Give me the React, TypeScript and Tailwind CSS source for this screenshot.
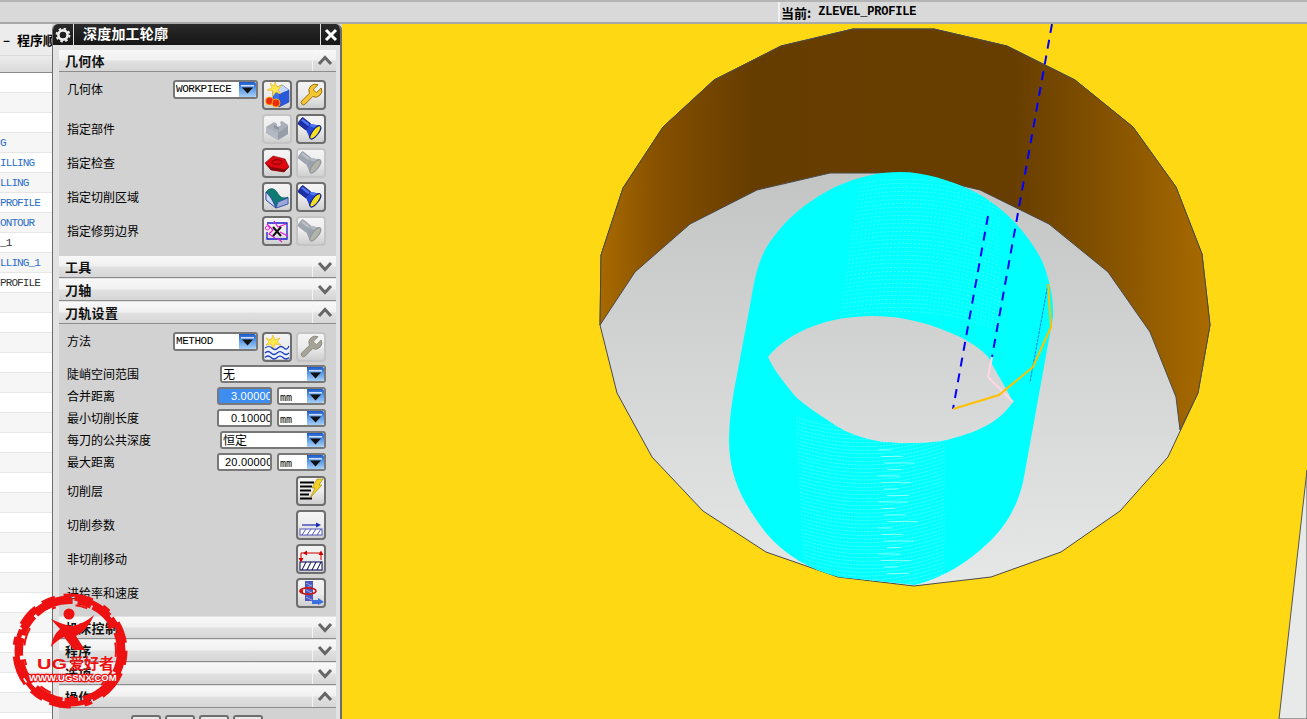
import React from "react";

const CJK = '"Noto Sans CJK SC","Liberation Sans",sans-serif';

const outer = "600,325 601,255 623,188 663,127 714,80 781,46 853,29 934,29 1007,46 1075,80 1133,127 1176,187 1202,254 1210,325 1198,393 1168,457 1120,511 1061,552 991,577 914,586 838,577 766,552 703,511 652,457 617,393";
const wall = "600,325 601,255 623,188 663,127 714,80 781,46 853,29 934,29 1007,46 1075,80 1133,127 1176,187 1202,254 1210,325 1198,393 1180,430 1176,397 1150,332 1108,272 1049,224 980,190 908,173 830,173 757,190 690,224 635,272";
const cyan = "M729 440 C729 420 732 400 736 380 L751 300 C755 275 759 262 765 250 C780 225 800 205 835 187 C860 176 880 172 900 172 C925 172 950 180 975 192 C1005 208 1030 235 1043 263 C1050 282 1054 300 1053 317 L1024 477 C1020 500 1008 525 988 543 C968 562 945 577 915 585 L839 577 C810 570 785 555 766 533 C745 505 729 480 729 440 Z";
const lens = "M768 357 C790 330 830 316 873 316 C905 316 935 325 960 337 C975 345 982 350 988 357 C998 375 1006 388 1013 402 C1000 420 985 430 947 440 C930 443 920 443 910 443 C895 443 885 443 873 440 C855 436 842 430 832 423 C815 412 805 405 796 397 C782 380 774 370 768 357 Z";

function Scene() {
  const arcs: string[] = [];
  for (let i = 0; i < 44; i++) {
    const y = 418 + i * 3.7;
    arcs.push(`M${796 + i * 0.2} ${y} Q870 ${y + 22} 945 ${y - 4}`);
  }
  const top: string[] = [];
  for (let i = 0; i < 34; i++) {
    const y = 178 + i * 4;
    top.push(`M${860 - i * 0.6} ${y + 6} Q930 ${y - 8} 1000 ${y + 20}`);
  }
  const dashes: string[] = [];
  for (let i = 0; i < 20; i++) {
    const y = 450 + i * 6.5;
    dashes.push(`M${878 + (i % 4) * 3} ${y} h${14 + (i % 3) * 8}`);
  }
  return (
    <svg viewBox="342 24 965 695" className="block w-full h-full">
      <defs>
        <linearGradient id="floor" gradientUnits="userSpaceOnUse" x1="0" y1="173" x2="0" y2="586">
          <stop offset="0" stopColor="#c3c4c4" />
          <stop offset="1" stopColor="#e6e8e8" />
        </linearGradient>
        <linearGradient id="wall" gradientUnits="userSpaceOnUse" x1="600" y1="0" x2="1210" y2="0">
          <stop offset="0" stopColor="#a86a00" />
          <stop offset="0.1" stopColor="#854f00" />
          <stop offset="0.25" stopColor="#663d00" />
          <stop offset="0.68" stopColor="#683e00" />
          <stop offset="0.84" stopColor="#865300" />
          <stop offset="1" stopColor="#a96b00" />
        </linearGradient>
        <clipPath id="cy"><path d={cyan} /></clipPath>
      </defs>
      <polygon points="1307,470 1279,719 1307,719" fill="#e8eaea" stroke="#555" strokeWidth="1" />
      <polygon points={outer} fill="url(#floor)" stroke="#4a4a4a" strokeWidth="1" />
      <polygon points={wall} fill="url(#wall)" stroke="#4a4a4a" strokeWidth="1" />
      <path d={cyan} fill="#00ffff" />
      <g clipPath="url(#cy)" fill="none">
        <path d={arcs.join(" ")} stroke="#d8ffff" strokeWidth="0.6" strokeOpacity="0.55" strokeDasharray="2 1" />
        <path d={top.join(" ")} stroke="#d8ffff" strokeWidth="0.6" strokeOpacity="0.5" strokeDasharray="2 2" />
        <path d={dashes.join(" ")} stroke="#ffffff" strokeWidth="0.8" strokeOpacity="0.6" />
      </g>
      <path d={lens} fill="url(#floor)" />
      <g fill="none">
        <polyline points="1048,284 1030,382" stroke="#1a7ad8" strokeWidth="1" strokeDasharray="3 1" />
        <line x1="1052" y1="24" x2="992" y2="357" stroke="#0000ff" strokeWidth="2" strokeDasharray="9 7" />
        <line x1="988" y1="216" x2="953" y2="409" stroke="#0000ff" strokeWidth="2" strokeDasharray="9 7" />
        <polyline points="992,357 988,377 1013,402" stroke="#ffd8e4" strokeWidth="2" />
        <polyline points="953,409 999,395 1033,367 1051,327 1048,284" stroke="#ffc000" strokeWidth="2" />
      </g>
    </svg>
  );
}

const Chevron = ({ up }: { up?: boolean }) => (
  <svg width="16" height="11" viewBox="0 0 16 11">
    <polyline points={up ? "2,9 8,2.5 14,9" : "2,2 8,8.5 14,2"} fill="none" stroke="#666" strokeWidth="3" />
  </svg>
);

function Header({ title, up, className = "" }: { title: string; up?: boolean; className?: string }) {
  return (
    <div className={`h-[22px] flex items-center shrink-0 border-b border-[#8c8c8c] bg-[linear-gradient(#f7f8f7_0%,#f0f1f0_45%,#dfe0df_55%,#d5d6d5_100%)] ${className}`}>
      <span className="flex-1 pl-[6px] text-[13px] font-bold text-[#111] tracking-[0.3px]">{title}</span>
      <span className="w-[24px] h-full flex items-center justify-center border-l border-[#f4f4f4]">
        <Chevron up={up} />
      </span>
    </div>
  );
}

function IconBtn({ children, off }: { children: React.ReactNode; off?: boolean }) {
  return (
    <div className={`w-[30px] h-[30px] shrink-0 rounded-[4px] border-2 flex items-center justify-center bg-[linear-gradient(#f4f4f4_0%,#ececec_50%,#cfcfcf_100%)] ${off ? "border-[#c4c4c4]" : "border-[#6e6e6e]"}`}>
      {children}
    </div>
  );
}

const S = ({ children }: { children: React.ReactNode }) => (
  <svg width="26" height="26" viewBox="0 0 26 26">{children}</svg>
);

const IcoNew = () => (
  <S>
    <polygon points="9,7 18,3 25,8 25,20 15,25 9,21" fill="#3f6fe8" stroke="#1b3a9c" strokeWidth="0.6" />
    <polygon points="9,7 18,3 25,8 15,12" fill="#c8d8fc" />
    <polygon points="15,12 25,8 25,20 15,25" fill="#2a58d8" />
    <polygon points="11,0 13,5 18,3 14,8 17,12 12,10 9,14 9,9 3,8 8,6 6,1 10,4" fill="#ffe94a" stroke="#e0a800" strokeWidth="0.5" />
    <circle cx="5.5" cy="19" r="4" fill="#ef2a12" stroke="#ffc000" strokeWidth="0.8" />
    <circle cx="12" cy="21" r="4" fill="#ef2a12" stroke="#ffc000" strokeWidth="0.8" />
  </S>
);

const IcoWrench = ({ off }: { off?: boolean }) => (
  <svg width="26" height="26" viewBox="0 0 24 24">
    <path
      d="M14.7 6.3a1 1 0 0 0 0 1.4l1.6 1.6a1 1 0 0 0 1.4 0l3.77-3.77a6 6 0 0 1-7.94 7.94l-6.91 6.91a2.12 2.12 0 0 1-3-3l6.91-6.91a6 6 0 0 1 7.94-7.94l-3.76 3.76z"
      fill={off ? "#a5a296" : "#f4c632"}
      stroke={off ? "#8e8b80" : "#9a6a10"}
      strokeWidth="0.9"
    />
  </svg>
);

const IcoTorch = ({ off }: { off?: boolean }) => (
  <S>
    <g transform="rotate(38 13 13)">
      <rect x="-1" y="9" width="11" height="8" rx="1" fill={off ? "#a0a6b0" : "#1c2fa8"} stroke={off ? "#9298a2" : "#0a1460"} strokeWidth="0.6" />
      <rect x="0" y="10" width="9" height="2.4" fill={off ? "#bcc0c8" : "#4f78f0"} />
      <polygon points="10,9 18,5 18,21 10,17" fill={off ? "#9ca2ac" : "#2346d8"} />
      <polygon points="10,9 18,5 18,9 10,11.5" fill={off ? "#b4b8c0" : "#4f78f0"} />
      <ellipse cx="18.5" cy="13" rx="3" ry="8" fill={off ? "#b2b4a8" : "#f4e020"} stroke={off ? "#92969e" : "#10208a"} strokeWidth="1.1" />
    </g>
  </S>
);

const IcoPart = () => (
  <S>
    <polygon points="2,11 10,6 13,8 13,12 17,9 16,6 18,5 24,9 24,18 14,24 2,17" fill="#a9aeb8" />
    <polygon points="2,11 14,17 14,24 2,17" fill="#b4b8c2" />
    <polygon points="14,17 24,10 24,18 14,24" fill="#969ca8" />
    <polygon points="10,9 15,11 15,14 10,12" fill="#8f95a2" />
  </S>
);

const IcoCheck = () => (
  <S>
    <polygon points="1,13 9,6 21,9 25,17 20,22 7,20" fill="#e00810" stroke="#7a0408" strokeWidth="0.6" />
    <polygon points="1,13 7,17 20,19 25,17 20,22 7,20" fill="#8c060c" />
    <ellipse cx="13" cy="12" rx="5" ry="2.2" fill="none" stroke="#7a0408" strokeWidth="1" />
  </S>
);

const IcoArea = () => (
  <S>
    <path d="M2 8 C6 3 10 4 13 8 C16 13 18 15 24 13 L24 20 L12 24 L2 16 Z" fill="#0f7a72" stroke="#0a4a48" strokeWidth="0.5" />
    <path d="M2 8 L2 16 L12 24 C9 18 8 14 2 8 Z" fill="#cfd8f4" stroke="#2a3ab0" strokeWidth="0.8" />
    <path d="M12 24 L24 20 L24 14 L14 18 Z" fill="#9aa8d8" stroke="#2a3ab0" strokeWidth="0.6" />
  </S>
);

const IcoTrim = () => (
  <S>
    <path d="M3 5 H23 V21 H3 V14" fill="none" stroke="#1c1cd0" strokeWidth="1.3" />
    <path d="M3 6 L9 12 L5 16 L11 20 M10 3 L14 9 L22 6 M16 14 L24 18 M13 20 L18 24" fill="none" stroke="#e020d0" strokeWidth="1.2" />
    <circle cx="3.5" cy="10" r="2" fill="none" stroke="#e020d0" strokeWidth="1" />
    <path d="M9 9 L17 18 M17 9 L9 18" stroke="#111" strokeWidth="2" />
  </S>
);

const IcoMethod = () => (
  <S>
    <polygon points="9,1 11,6 16,4 13,8 17,11 11,10 9,15 7,10 2,11 5,8 2,4 7,6" fill="#ffe94a" stroke="#e0a800" strokeWidth="0.5" />
    <path d="M1 14 Q5 11 8 14 T14 14 T20 14 T25 12 V25 H1 Z" fill="#e8f0fc" />
    <path d="M1 14 Q5 11 8 14 T14 14 T20 14 T25 12" fill="none" stroke="#1a3ab8" strokeWidth="1.2" />
    <path d="M1 19 q3 -3 6 0 t6 0 t6 0 t6 0 M1 23.5 q3 -3 6 0 t6 0 t6 0 t6 0" fill="none" stroke="#1a3ab8" strokeWidth="1.2" />
  </S>
);

const IcoLevels = () => (
  <S>
    <path d="M2 4.5 H16 M2 8.5 H14 M2 12.5 H13 M2 16.5 H11 M2 20.5 H14" stroke="#000" strokeWidth="1.8" />
    <polygon points="19,1 25,1 21,7 24,7 12,20 17,10 14,10" fill="#f4d020" stroke="#8a7000" strokeWidth="0.5" />
  </S>
);

const Hatch = ({ stroke, y, h }: { stroke: string; y: number; h: number }) => (
  <g>
    <rect x="2" y={y} width="22" height={h} fill="#fff" stroke={stroke} strokeWidth="1" />
    <path d={`M4 ${y + h} L8 ${y} M9 ${y + h} L13 ${y} M14 ${y + h} L18 ${y} M19 ${y + h} L23 ${y}`} stroke={stroke} strokeWidth="1" />
  </g>
);

const IcoParams = () => (
  <S>
    <path d="M4 13 H19" stroke="#1a2ab0" strokeWidth="1.2" />
    <polygon points="18,10.5 23,13 18,15.5" fill="#1a2ab0" />
    <Hatch stroke="#5058b8" y={17} h={6} />
  </S>
);

const IcoMoves = () => (
  <S>
    <path d="M3 14 V7 H23 V14" fill="none" stroke="#d00000" strokeWidth="1" />
    <polygon points="9,4.5 9,9.5 5,7" fill="#d00000" />
    <polygon points="0.5,12 5.5,12 3,16.5" fill="#d00000" />
    <polygon points="20.5,9 25.5,9 23,4.5" fill="#d00000" />
    <Hatch stroke="#000050" y={16} h={8} />
  </S>
);

const IcoFeed = () => (
  <S>
    <rect x="7" y="1" width="8" height="20" fill="#4a58c0" />
    <path d="M8 3 L14 6 M8 8 L14 5 M8 10 L14 13 M8 15 L14 12 M8 17 L14 20" stroke="#a0a8e8" strokeWidth="1" />
    <ellipse cx="10" cy="11" rx="8" ry="3.2" fill="none" stroke="#d01810" strokeWidth="1.8" />
    <polygon points="1,11 5,9 5,14" fill="#d01810" />
    <rect x="14" y="20" width="7" height="4" fill="#3a70e0" />
    <polygon points="20,18 26,22 20,25" fill="#3a70e0" />
  </S>
);

const Arrow = () => (
  <span className="w-[17px] h-full shrink-0 flex items-center justify-center rounded-r-[2px] bg-[linear-gradient(#1c58c8_0%,#5a9ae8_45%,#a8d0f4_100%)]">
    <svg width="13" height="9" viewBox="0 0 13 9">
      <rect x="0" y="0" width="13" height="1.5" fill="#fff" opacity="0.75" />
      <polygon points="1,2.5 12,2.5 6.5,8.5" fill="#111" />
    </svg>
  </span>
);

function Select({ value, className, mono, small }: { value: string; className: string; mono?: boolean; small?: boolean }) {
  const font = small ? '"DejaVu Sans Mono",monospace' : mono ? '"Liberation Mono",monospace' : CJK;
  return (
    <div className={`shrink-0 flex items-stretch overflow-hidden rounded-[3px] border-2 border-[#787878] bg-white ${className}`}>
      <span
        className={`flex-1 flex items-center pl-[1px] whitespace-nowrap text-black ${mono ? "text-[11px] tracking-[-0.45px]" : small ? "text-[10px] pt-[2px]" : "text-[12px]"}`}
        style={{ fontFamily: font }}
      >
        {value}
      </span>
      <Arrow />
    </div>
  );
}

function NumField({ value, on, wide }: { value: string; on?: boolean; wide?: boolean }) {
  return (
    <div className={`w-[55px] h-[18px] shrink-0 overflow-hidden rounded-[3px] border-2 border-[#787878] flex items-center whitespace-nowrap text-[11px] ${wide ? "pl-[6px]" : "pl-[12px]"} ${on ? "bg-[#3d8ef0] text-white" : "bg-white text-black"}`} style={{ fontFamily: '"Liberation Sans",sans-serif', letterSpacing: "0.2px" }}>
      {value}
    </div>
  );
}

const Label = ({ children }: { children: React.ReactNode }) => (
  <span className="flex-1 text-[12px] text-black leading-none whitespace-nowrap">{children}</span>
);

function BtnRow({ label, a, b }: { label: string; a?: React.ReactNode; b: React.ReactNode }) {
  return (
    <div className="h-[30px] flex items-center gap-[4px] pl-[8px]">
      <Label>{label}</Label>
      {a}
      {b}
    </div>
  );
}

function NumRow({ label, value, on, wide }: { label: string; value: string; on?: boolean; wide?: boolean }) {
  return (
    <div className="h-[18px] flex items-center pl-[8px]">
      <Label>{label}</Label>
      <NumField value={value} on={on} wide={wide} />
      <Select value="mm" small className="w-[49px] h-[18px] ml-[5px]" />
    </div>
  );
}

function SelRow({ label, value }: { label: string; value: string }) {
  return (
    <div className="h-[18px] flex items-center pl-[8px]">
      <Label>{label}</Label>
      <Select value={value} className="w-[106px] h-[18px]" />
    </div>
  );
}

function Panel() {
  return (
    <div className="w-[290px] shrink-0 flex flex-col overflow-hidden rounded-t-[6px] border-l border-r-2 border-[#6c6c6c] bg-[#e2e2e2]" style={{ fontFamily: CJK }}>
      <div className="h-[21px] shrink-0 flex items-stretch bg-[linear-gradient(#2a2a2a_0%,#161616_100%)]">
        <span className="w-[21px] flex items-center justify-center border-r border-[#dddddd]">
          <svg width="16" height="16" viewBox="0 0 16 16">
            <circle cx="8" cy="8" r="4.6" fill="none" stroke="#eee" strokeWidth="2.6" />
            <circle cx="8" cy="8" r="6.4" fill="none" stroke="#eee" strokeWidth="2" strokeDasharray="2.5 2.5" />
          </svg>
        </span>
        <span className="flex-1 pl-[9px] text-[14px] leading-[19px] font-bold text-white tracking-[0.2px]">深度加工轮廓</span>
        <span className="w-[20px] flex items-center justify-center border-l border-[#dddddd]">
          <svg width="14" height="14" viewBox="0 0 14 14">
            <path d="M2 2 L12 12 M12 2 L2 12" stroke="#fff" strokeWidth="3" />
          </svg>
        </span>
      </div>
      <div className="flex-1 flex flex-col pl-[6px] pr-[4px] pt-[5px] min-h-0">
        <Header title="几何体" up />
        <div className="h-[184px] shrink-0 bg-[#d2d2d2] pt-[8px] pr-[10px] flex flex-col gap-[4px]">
          <div className="h-[30px] flex items-start gap-[4px] pl-[8px]">
            <span className="flex-1 pt-[3px] text-[12px] leading-none text-black">几何体</span>
            <Select value="WORKPIECE" mono className="w-[85px] h-[19px]" />
            <IconBtn><IcoNew /></IconBtn>
            <IconBtn><IcoWrench /></IconBtn>
          </div>
          <BtnRow label="指定部件" a={<IconBtn off><IcoPart /></IconBtn>} b={<IconBtn><IcoTorch /></IconBtn>} />
          <BtnRow label="指定检查" a={<IconBtn><IcoCheck /></IconBtn>} b={<IconBtn off><IcoTorch off /></IconBtn>} />
          <BtnRow label="指定切削区域" a={<IconBtn><IcoArea /></IconBtn>} b={<IconBtn><IcoTorch /></IconBtn>} />
          <BtnRow label="指定修剪边界" a={<IconBtn><IcoTrim /></IconBtn>} b={<IconBtn off><IcoTorch off /></IconBtn>} />
        </div>
        <Header title="工具" />
        <Header title="刀轴" className="mt-[1px]" />
        <Header title="刀轨设置" up className="mt-[1px]" />
        <div className="h-[292px] shrink-0 bg-[#d2d2d2] pt-[8px] pr-[10px] flex flex-col">
          <div className="h-[30px] flex items-start gap-[4px] pl-[8px]">
            <span className="flex-1 pt-[3px] text-[12px] leading-none text-black">方法</span>
            <Select value="METHOD" mono className="w-[85px] h-[19px]" />
            <IconBtn><IcoMethod /></IconBtn>
            <IconBtn off><IcoWrench off /></IconBtn>
          </div>
          <div className="mt-[3px] flex flex-col gap-[4px]">
            <SelRow label="陡峭空间范围" value="无" />
            <NumRow label="合并距离" value="3.00000" on />
            <NumRow label="最小切削长度" value="0.10000" />
            <SelRow label="每刀的公共深度" value="恒定" />
            <NumRow label="最大距离" value="20.00000" wide />
          </div>
          <div className="mt-[5px] flex flex-col gap-[4px]">
            <BtnRow label="切削层" b={<IconBtn><IcoLevels /></IconBtn>} />
            <BtnRow label="切削参数" b={<IconBtn><IcoParams /></IconBtn>} />
            <BtnRow label="非切削移动" b={<IconBtn><IcoMoves /></IconBtn>} />
            <BtnRow label="进给率和速度" b={<IconBtn><IcoFeed /></IconBtn>} />
          </div>
        </div>
        <Header title="机床控制" className="mt-[1px]" />
        <Header title="程序" className="mt-[1px]" />
        <Header title="选项" className="mt-[1px]" />
        <Header title="操作" up className="mt-[1px]" />
        <div className="flex-1 bg-[#d2d2d2] pt-[7px] flex justify-center gap-[4px] pr-[1px]">
          <div className="w-[30px] h-[20px] rounded-[3px] border-2 border-[#6e6e6e] bg-[#e8e8e8]" />
          <div className="w-[30px] h-[20px] rounded-[3px] border-2 border-[#6e6e6e] bg-[#e8e8e8]" />
          <div className="w-[30px] h-[20px] rounded-[3px] border-2 border-[#6e6e6e] bg-[#e8e8e8]" />
          <div className="w-[30px] h-[20px] rounded-[3px] border-2 border-[#6e6e6e] bg-[#e8e8e8]" />
        </div>
      </div>
    </div>
  );
}

const rows: { t: string; c: string }[] = [
  { t: "", c: "" },
  { t: "", c: "" },
  { t: "", c: "" },
  { t: "G", c: "text-[#2b6fc8]" },
  { t: "ILLING", c: "text-[#2b6fc8]" },
  { t: "LLING", c: "text-[#2b6fc8]" },
  { t: "PROFILE", c: "text-[#2b6fc8]" },
  { t: "ONTOUR", c: "text-[#2b6fc8]" },
  { t: "_1", c: "text-[#333]" },
  { t: "LLING_1", c: "text-[#2b6fc8]" },
  { t: "PROFILE", c: "text-[#333]" },
];

function Nav() {
  const all = [...rows, ...Array.from({ length: 22 }, () => ({ t: "", c: "" }))];
  return (
    <div className="w-[52px] shrink-0 flex flex-col overflow-hidden bg-white">
      <div className="h-[31px] shrink-0 bg-[#ececec] flex items-center gap-[7px] pl-[3px] text-[13px] font-bold text-black whitespace-nowrap" style={{ fontFamily: CJK }}>
        <span>–</span>
        <span>程序顺</span>
      </div>
      <div className="h-[18px] shrink-0 border-y border-[#8a8a8a] border-t-[#dcdcdc] bg-[linear-gradient(#ececec,#dadada)]" />
      {all.map((r, i) => (
        <div
          key={i}
          className={`h-[20px] shrink-0 flex items-center pt-[1px] border-b border-[#e6e6e6] text-[11px] tracking-[-0.9px] leading-none whitespace-nowrap ${i % 2 === 1 ? "bg-[#f6f6f6]" : "bg-white"} ${r.c}`}
          style={{ fontFamily: '"Liberation Mono",monospace' }}
        >
          {r.t}
        </div>
      ))}
    </div>
  );
}

function Watermark() {
  return (
    <div className="absolute left-[10px] top-[590px] w-[122px] h-[124px] pointer-events-none">
      <svg viewBox="0 0 122 124" className="block w-full h-full">
        <circle cx="60" cy="61" r="53" fill="none" stroke="#ee1111" strokeWidth="5" strokeDasharray="60 3 70 5 50 2 60 4 40 3" />
        <circle cx="60" cy="61" r="50" fill="none" stroke="#ee1111" strokeWidth="6" strokeDasharray="22 3 40 5 14 2 30 6 26 4 18 3" />
        <circle cx="60" cy="61" r="56" fill="none" stroke="#ee1111" strokeWidth="3" strokeDasharray="14 9 30 12 8 14 22 8" />
        <circle cx="60" cy="61" r="46" fill="none" stroke="#ee1111" strokeWidth="2" strokeDasharray="6 14 18 30 4 20 12 26" />
        <circle cx="59" cy="24" r="5.5" fill="#ee1111" />
        <path d="M41 29 Q56 36 62 36 Q74 34 84 25 Q78 40 66 46 L75 60 L64 60 L54 47 Q47 50 41 57 Q42 46 50 39 Q45 34 41 29 Z" fill="#ee1111" />
        <text x="27" y="79" fontFamily='"Liberation Sans",sans-serif' fontSize="15" fontWeight="700" fill="#ee1111" textLength="30" lengthAdjust="spacingAndGlyphs">UG</text>
        <text x="59" y="79" fontFamily={CJK} fontSize="15" fontWeight="700" fill="#ee1111">爱好者</text>
        <text x="19" y="91" fontFamily='"Liberation Sans",sans-serif' fontSize="9.5" fontWeight="700" fill="#fff" stroke="#ee1111" strokeWidth="2.4" style={{ paintOrder: "stroke" }}>WWW.UGSNX.COM</text>
      </svg>
    </div>
  );
}

export default function App() {
  return (
    <div className="relative w-[1307px] h-[719px] overflow-hidden flex flex-col bg-[#d8d8d8]">
      <div className="h-[24px] shrink-0 flex border-t-2 border-t-[#b4b4b4] border-b-2 border-b-[#a8a8a8] bg-[#d9d9d9]">
        <div className="w-[780px] shrink-0 border-r-2 border-[#f0f0f0]" />
        <div className="pl-[1px] flex items-center font-bold text-black whitespace-nowrap">
          <span className="text-[13px] leading-none" style={{ fontFamily: CJK }}>当前:</span>
          <span className="pl-[7px] text-[12px] tracking-[-0.2px] leading-none" style={{ fontFamily: '"Liberation Mono",monospace' }}>ZLEVEL_PROFILE</span>
        </div>
      </div>
      <div className="flex-1 flex min-h-0">
        <Nav />
        <Panel />
        <div className="flex-1 min-w-0 bg-[#ffd814]">
          <Scene />
        </div>
      </div>
      <Watermark />
    </div>
  );
}
